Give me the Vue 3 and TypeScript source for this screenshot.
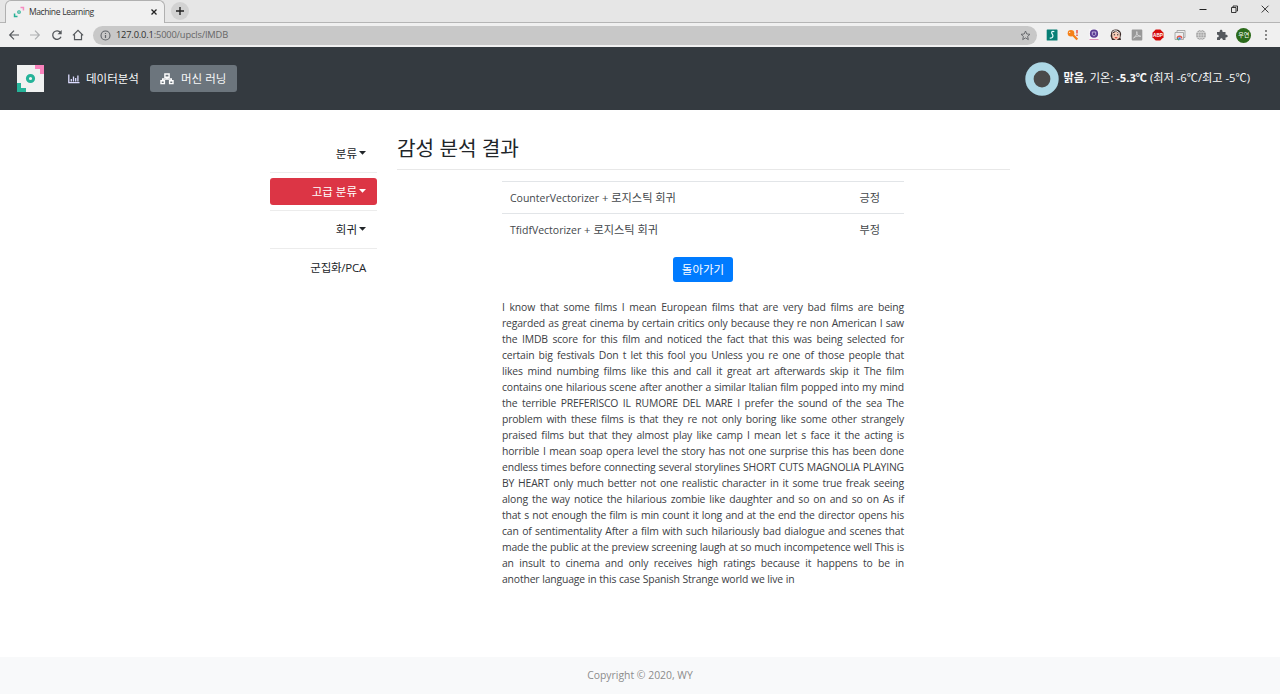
<script setup lang="ts">
interface MenuItem {
  label: string
  caret: boolean
  active: boolean
}

const menu: MenuItem[] = [
  { label: '분류', caret: true, active: false },
  { label: '고급 분류', caret: true, active: true },
  { label: '회귀', caret: true, active: false },
  { label: '군집화/PCA', caret: false, active: false },
]

const results = [
  { model: 'CounterVectorizer', method: ' + 로지스틱 회귀', verdict: '긍정' },
  { model: 'TfidfVectorizer', method: ' + 로지스틱 회귀', verdict: '부정' },
]

const review: string[] = [
  'I know that some films I mean European films that are very bad films are being',
  'regarded as great cinema by certain critics only because they re non American I saw',
  'the IMDB score for this film and noticed the fact that this was being selected for',
  'certain big festivals Don t let this fool you Unless you re one of those people that',
  'likes mind numbing films like this and call it great art afterwards skip it The film',
  'contains one hilarious scene after another a similar Italian film popped into my mind',
  'the terrible PREFERISCO IL RUMORE DEL MARE I prefer the sound of the sea The',
  'problem with these films is that they re not only boring like some other strangely',
  'praised films but that they almost play like camp I mean let s face it the acting is',
  'horrible I mean soap opera level the story has not one surprise this has been done',
  'endless times before connecting several storylines SHORT CUTS MAGNOLIA PLAYING',
  'BY HEART only much better not one realistic character in it some true freak seeing',
  'along the way notice the hilarious zombie like daughter and so on and so on As if',
  'that s not enough the film is min count it long and at the end the director opens his',
  'can of sentimentality After a film with such hilariously bad dialogue and scenes that',
  'made the public at the preview screening laugh at so much incompetence well This is',
  'an insult to cinema and only receives high ratings because it happens to be in',
  'another language in this case Spanish Strange world we live in',
]
</script>

<template>
  <div class="window">
    <div class="tabstrip">
      <div class="tab">
        <svg class="favicon" viewBox="0 0 12 12">
          <path d="M7.500 .8h3.700V4.500h-1.500V2.300H7.500z" fill="#f58cc0" />
          <path d="M.8 7.500h1.500v2.200H4.500v1.500H.8z" fill="#25b095" />
          <circle cx="6" cy="6" r="1.300" fill="none" stroke="#25b095" stroke-width="1.100" />
        </svg>
        <span class="tab-title">Machine Learning</span>
        <svg class="tab-close" viewBox="0 0 8 8"><path d="M1.500 1.500l5 5m0-5l-5 5" stroke="#222" stroke-width="1.300" /></svg>
      </div>
      <div class="new-tab">
        <svg viewBox="0 0 18 18"><path d="M9 5v8M5 9h8" stroke="#222" stroke-width="1.400" /></svg>
      </div>
      <div class="controls">
        <svg viewBox="0 0 10 10"><path d="M1.500 5.500h7" stroke="#222" /></svg>
        <svg viewBox="0 0 10 10"><path d="M2.500 3.500h4.500v5h-4.500zM4 3.500V2h4.500v5h-1" fill="none" stroke="#222" stroke-width=".9" /></svg>
        <svg viewBox="0 0 10 10"><path d="M1.700 1.700l6.800 6.800m0-6.800l-6.800 6.800" stroke="#222" stroke-width=".9" /></svg>
      </div>
    </div>

    <div class="toolbar">
      <div class="nav-buttons">
        <svg viewBox="0 0 12 12"><path d="M11 6H2M6 1.700L1.700 6 6 10.300" fill="none" stroke="#55585c" stroke-width="1.200" /></svg>
        <svg viewBox="0 0 12 12"><path d="M1 6H10M6 1.700L10.300 6 6 10.300" fill="none" stroke="#adafb1" stroke-width="1.200" /></svg>
        <svg viewBox="0 0 12 12">
          <path d="M10 7.800a4.300 4.300 0 1 1-.5-4.300" fill="none" stroke="#55585c" stroke-width="1.300" />
          <path d="M10.700 1v4.200H6.500z" fill="#55585c" />
        </svg>
        <svg viewBox="0 0 12 12"><path d="M.9 6.400L6 1.400l5.100 5M2.500 5.500v5.200h7V5.500" fill="none" stroke="#55585c" stroke-width="1.200" /></svg>
      </div>
      <div class="address">
        <svg class="info" viewBox="0 0 11 11">
          <circle cx="5.500" cy="5.500" r="4.500" fill="none" stroke="#5f6368" stroke-width="1.100" />
          <path d="M5.500 5v3M5.500 2.900v1.200" stroke="#5f6368" stroke-width="1.200" />
        </svg>
        <span class="url"><b>127.0.0.1</b>:5000/upcls/IMDB</span>
        <svg class="star" viewBox="0 0 11 11"><path d="M5.500 1l1.300 3 3.200.3-2.400 2.100.7 3.200-2.800-1.700-2.800 1.700.7-3.200L1 4.300 4.200 4z" fill="none" stroke="#606266" stroke-width=".9" /></svg>
      </div>
      <div class="extensions">
        <svg viewBox="0 0 12 12">
          <rect x=".7" y=".5" width="10.800" height="11" rx=".6" fill="#087f75" />
          <path d="M8.300 2.700C6.700 2 5.300 2.700 5.700 4c.4 1.200 1.500 1.600 1.200 3.200C6.700 8.600 5.300 9.300 3.700 9" fill="none" stroke="#e8ffff" stroke-width="1.200" />
        </svg>
        <svg viewBox="0 0 12 12">
          <circle cx="4" cy="4.300" r="3.300" fill="#f58018" />
          <path d="M5.500 5.500l4.800 5" stroke="#f58018" stroke-width="2.300" />
          <circle cx="2.700" cy="3.300" r=".6" fill="#fff" />
          <path d="M10 1v3.500M10 5.500V7" stroke="#e13b32" stroke-width="1.300" />
        </svg>
        <svg viewBox="0 0 12 12">
          <path d="M1 0h10v11H1z" fill="#f7f4f8" />
          <circle cx="6" cy="4.700" r="4.100" fill="#5a3b93" />
          <path d="M4.300 3h3.400v2.200c0 2-3.400 2-3.400 0z" fill="none" stroke="#d8cbed" stroke-width=".8" />
          <path d="M1.500 10.500h9" stroke="#dc91b7" />
        </svg>
        <svg viewBox="0 0 12 12">
          <path d="M1 5C1 2 3 .5 6 .6c3 0 4.700 1.800 5.200 4.400l-.8 3.500L11 11H2L.6 7z" fill="#3b2a27" />
          <path d="M2 4.500C4 4 5.500 3 6 2.500L9.800 5v3.500L6.300 11.300 2.500 9z" fill="#f6cdb9" />
          <path d="M2 3.500L4 1.800l3 .2 3 2.500" fill="none" stroke="#fff" />
          <path d="M3.800 5.800h1.300M7 5.800h1.300" stroke="#222" />
          <path d="M4.800 8.700h2.500" stroke="#d9362c" stroke-width="1.100" />
        </svg>
        <svg viewBox="0 0 12 12">
          <rect x=".7" y=".5" width="10.600" height="11" rx="1" fill="#989898" />
          <path d="M2.500 9C5 7.500 6.300 4.500 5.800 2.500 5.500 5 7 7.300 9.800 7.300 7 6.700 4.500 7.300 2.500 9z" fill="none" stroke="#ddd" stroke-width=".8" />
        </svg>
        <svg viewBox="0 0 12 12">
          <path d="M3.700.5h4.600l3.200 3.200v4.600l-3.200 3.200H3.700L.5 8.300V3.700z" fill="#d60c0c" />
          <text x="6" y="7.900" text-anchor="middle" class="abp">ABP</text>
        </svg>
        <svg viewBox="0 0 12 12">
          <path d="M3 3V1.500h8v7H9.500M1 3.500h8.500v7H1z" fill="#eee" stroke="#999" stroke-width=".8" />
          <path d="M3.300 9.500a2.200 2.200 0 0 1 4.400 0" fill="none" stroke="#df5548" stroke-width="1.500" />
          <path d="M3.200 9l.8 1.800h1.300" fill="none" stroke="#33a853" />
          <circle cx="5.500" cy="9.400" r="1.200" fill="#4384ee" />
        </svg>
        <svg viewBox="0 0 12 12">
          <circle cx="6" cy="6" r="5" fill="#a6a6a6" />
          <path d="M1 6h10M6 1v10M2 3.500h8M2 8.500h8M6 1C2.500 3.500 2.500 8.500 6 11M6 1c3.500 2.500 3.500 7.500 0 10" fill="none" stroke="#e3e3e3" stroke-width=".6" />
        </svg>
        <svg viewBox="0 0 12 12"><path d="M1 3h2.700c-.5-3 3.300-3 2.800 0h3v2.700c3-.4 3 3.200 0 2.800V11H6.800C7 8.600 4 8.600 4 11H1V8.300c2.400.2 2.400-2.800 0-2.600z" fill="#55595e" /></svg>
      </div>
      <div class="avatar">우연</div>
      <svg class="kebab" viewBox="0 0 4 12">
        <circle cx="2" cy="2" r=".9" fill="#555" /><circle cx="2" cy="6" r=".9" fill="#555" /><circle cx="2" cy="10" r=".9" fill="#555" />
      </svg>
    </div>

    <header class="navbar">
      <svg class="logo" viewBox="0 0 27 27">
        <path d="M0 0h27v27H0z" fill="#f0f1f1" />
        <path d="M18 0h9v9h-4V4h-5z" fill="#fa83bd" />
        <path d="M0 18h4v5h5v4H0z" fill="#25b399" />
        <circle cx="13.500" cy="13.500" r="3.100" fill="none" stroke="#25b399" stroke-width="3" />
      </svg>
      <a class="nav-link">
        <svg class="chart" viewBox="0 0 12 10"><path d="M.8.5v8.200H11.500" fill="none" stroke="#dcdcff" stroke-width="1.300" /><path d="M3.300 5v2.600M5.500 2.500V7.600M7.700 4v3.600M9.900 1.500V7.600" stroke="#dcdcff" stroke-width="1.300" /></svg>
        <span>데이터분석</span>
      </a>
      <a class="nav-link selected">
        <svg class="network" viewBox="0 0 14 12"><path d="M4.900 1h4.200v3.200H4.900zM1 7.800h3.400v2.800H1zM9.600 7.800H13v2.800H9.600zM7 4.300V6M2.700 7.700V6h8.600v1.700" fill="none" stroke="#fff" stroke-width="1.400" /></svg>
        <span>머신 러닝</span>
      </a>
      <div class="weather">
        <svg viewBox="0 0 34 34"><circle cx="17" cy="17" r="16.700" fill="#add8e6" /><circle cx="17" cy="17" r="8.400" fill="#4a4a4a" /></svg>
        <span class="forecast"><b>맑음</b>, 기온: <b>-5.3℃</b> (최저 -6℃/최고 -5℃)</span>
      </div>
    </header>

    <main class="content">
      <nav class="sidebar">
        <div v-for="item in menu" :key="item.label" class="slot">
          <a :class="['side-link', { active: item.active, plain: !item.caret }]">{{ item.label }}<svg v-if="item.caret" class="caret" viewBox="0 0 7 4"><path d="M0 0h7L3.500 3.800z" fill="currentColor" /></svg></a>
        </div>
      </nav>
      <section class="panel">
        <h3>감성 분석 결과</h3>
        <div class="body">
          <div v-for="row in results" :key="row.model" class="row">
            <span class="cell"><span class="model">{{ row.model }}</span>{{ row.method }}</span>
            <span class="verdict">{{ row.verdict }}</span>
          </div>
          <button class="back">돌아가기</button>
          <div class="review">
            <div v-for="line in review" :key="line" class="line">{{ line }}</div>
          </div>
        </div>
      </section>
    </main>

    <footer>Copyright © 2020, WY</footer>
  </div>
</template>

<style>
body {
  overflow: hidden;
  background: #fff;
}
</style>

<style scoped>
* {
  box-sizing: border-box;
}
svg {
  display: block;
  flex: none;
}
.window {
  width: 1280px;
  height: 694px;
  display: flex;
  flex-direction: column;
  overflow: hidden;
  color: #212529;
  font: 11.5px/16px "Open Sans", "Noto Sans CJK KR", sans-serif;
}
.tabstrip {
  height: 23px;
  flex: none;
  display: flex;
  align-items: flex-end;
  padding-left: 5px;
  background: #e6e6e6;
  border-bottom: 1px solid #b5b5b5;
}
.tab {
  width: 160px;
  height: 23px;
  margin-bottom: -1px;
  display: flex;
  align-items: center;
  padding: 0 6px 1px 7px;
  border: 1px solid #b0b0b0;
  border-bottom: 0;
  border-radius: 6px 6px 0 0;
  background: #f0f0f0;
}
.favicon {
  width: 12px;
  height: 12px;
}
.tab-title {
  flex: 1;
  padding-left: 4px;
  font: 8.6px/12px "Open Sans", sans-serif;
  letter-spacing: -0.45px;
  word-spacing: 0.5px;
  color: #333;
}
.tab-close {
  width: 8px;
  height: 8px;
}
.new-tab {
  width: 18px;
  height: 18px;
  margin: 0 0 2px 6px;
  border-radius: 50%;
  background: #d2d2d2;
}
.controls {
  display: flex;
  gap: 21px;
  margin: 0 10px 8px auto;
}
.controls svg {
  width: 10px;
  height: 10px;
}
.toolbar {
  height: 24px;
  flex: none;
  display: flex;
  align-items: center;
  padding: 0 12px 0 8px;
  background: #f0f0f0;
}
.nav-buttons {
  display: flex;
  gap: 9.300px;
}
.nav-buttons svg {
  width: 12px;
  height: 12px;
}
.address {
  width: 944px;
  height: 19px;
  margin-left: 9px;
  display: flex;
  align-items: center;
  padding: 0 6px 0 7px;
  border-radius: 10px;
  background: #c8c8c8;
}
.info,
.star {
  width: 11px;
  height: 11px;
}
.url {
  flex: 1;
  padding-left: 5px;
  font-size: 9.300px;
  letter-spacing: -0.16px;
  color: #666;
}
.url b {
  font-weight: 400;
  color: #303030;
}
.extensions {
  display: flex;
  gap: 9.300px;
  margin-left: 9px;
}
.extensions svg {
  width: 12px;
  height: 12px;
}
.abp {
  font: bold 4.700px "Liberation Sans", sans-serif;
  fill: #fff;
}
.avatar {
  width: 15px;
  height: 15px;
  margin-left: 8px;
  border-radius: 50%;
  background: #2b6a1b;
  color: #fff;
  text-align: center;
  font: 6px/14px "Noto Sans CJK KR", sans-serif;
}
.kebab {
  width: 4px;
  height: 12px;
  margin-left: auto;
}
.navbar {
  height: 63px;
  flex: none;
  display: flex;
  align-items: center;
  padding: 0 30px 0 17px;
  background: #343a40;
  color: #f8f9fa;
}
.logo {
  width: 27px;
  height: 27px;
  margin-right: 14px;
}
.nav-link {
  width: 92px;
  height: 27px;
  display: flex;
  align-items: center;
  gap: 6px;
  padding: 0 10px;
  border-radius: 3px;
}
.selected {
  width: 87px;
  gap: 7px;
  background: #6c757d;
}
.chart {
  width: 12px;
  height: 10px;
}
.network {
  width: 14px;
  height: 12px;
}
.weather {
  display: flex;
  align-items: center;
  gap: 4px;
  margin-left: auto;
  font-size: 11.200px;
  white-space: nowrap;
}
.weather svg {
  width: 34px;
  height: 34px;
}
.forecast {
  padding-bottom: 2px;
}
.content {
  flex: 1;
  display: flex;
  padding-left: 270px;
}
.sidebar {
  width: 107px;
  padding-top: 25px;
}
.slot {
  height: 38px;
  padding: 5px 0;
  border-bottom: 1px solid #ececec;
}
.slot:last-child {
  border-bottom: 0;
}
.side-link {
  height: 27px;
  display: flex;
  justify-content: flex-end;
  align-items: center;
  padding-right: 11px;
  border-radius: 3px;
}
.plain {
  letter-spacing: -0.25px;
}
.active {
  background: #dc3545;
  color: #fff;
}
.caret {
  width: 7px;
  height: 4px;
  margin: 0 0 1px 2px;
}
.panel {
  width: 613px;
  margin-left: 20px;
}
h3 {
  height: 60px;
  margin: 0;
  padding-top: 23px;
  border-bottom: 1px solid #e8e8e8;
  font-size: 20.200px;
  line-height: 30px;
  font-weight: 400;
}
.body {
  width: 402px;
  margin: 11px 0 0 105px;
}
.row {
  height: 32px;
  display: flex;
  align-items: center;
  padding: 0 24px 0 8px;
  border-top: 1px solid #e2e5e8;
}
.row + .row {
  height: 33px;
}
.cell {
  flex: 1;
  white-space: pre;
}
.cell,
.verdict {
  color: #44484c;
  font-size: 11.200px;
}
.model {
  font-size: 10.500px;
}
.back {
  width: 60px;
  height: 25px;
  display: block;
  margin: 11px auto 17px;
  padding: 0;
  border: 0;
  border-radius: 3px;
  background: #007bff;
  color: #fff;
  font: inherit;
}
.line {
  height: 16px;
  font-size: 10.400px;
  letter-spacing: -0.16px;
  color: #3c4044;
  white-space: nowrap;
  text-align: justify;
  text-align-last: justify;
}
.line:last-child {
  text-align-last: left;
  word-spacing: 0.25px;
}
footer {
  height: 37px;
  flex: none;
  background: #f8f9fa;
  color: #8c8c8c;
  text-align: center;
  font-size: 10.400px;
  line-height: 37px;
}
</style>
